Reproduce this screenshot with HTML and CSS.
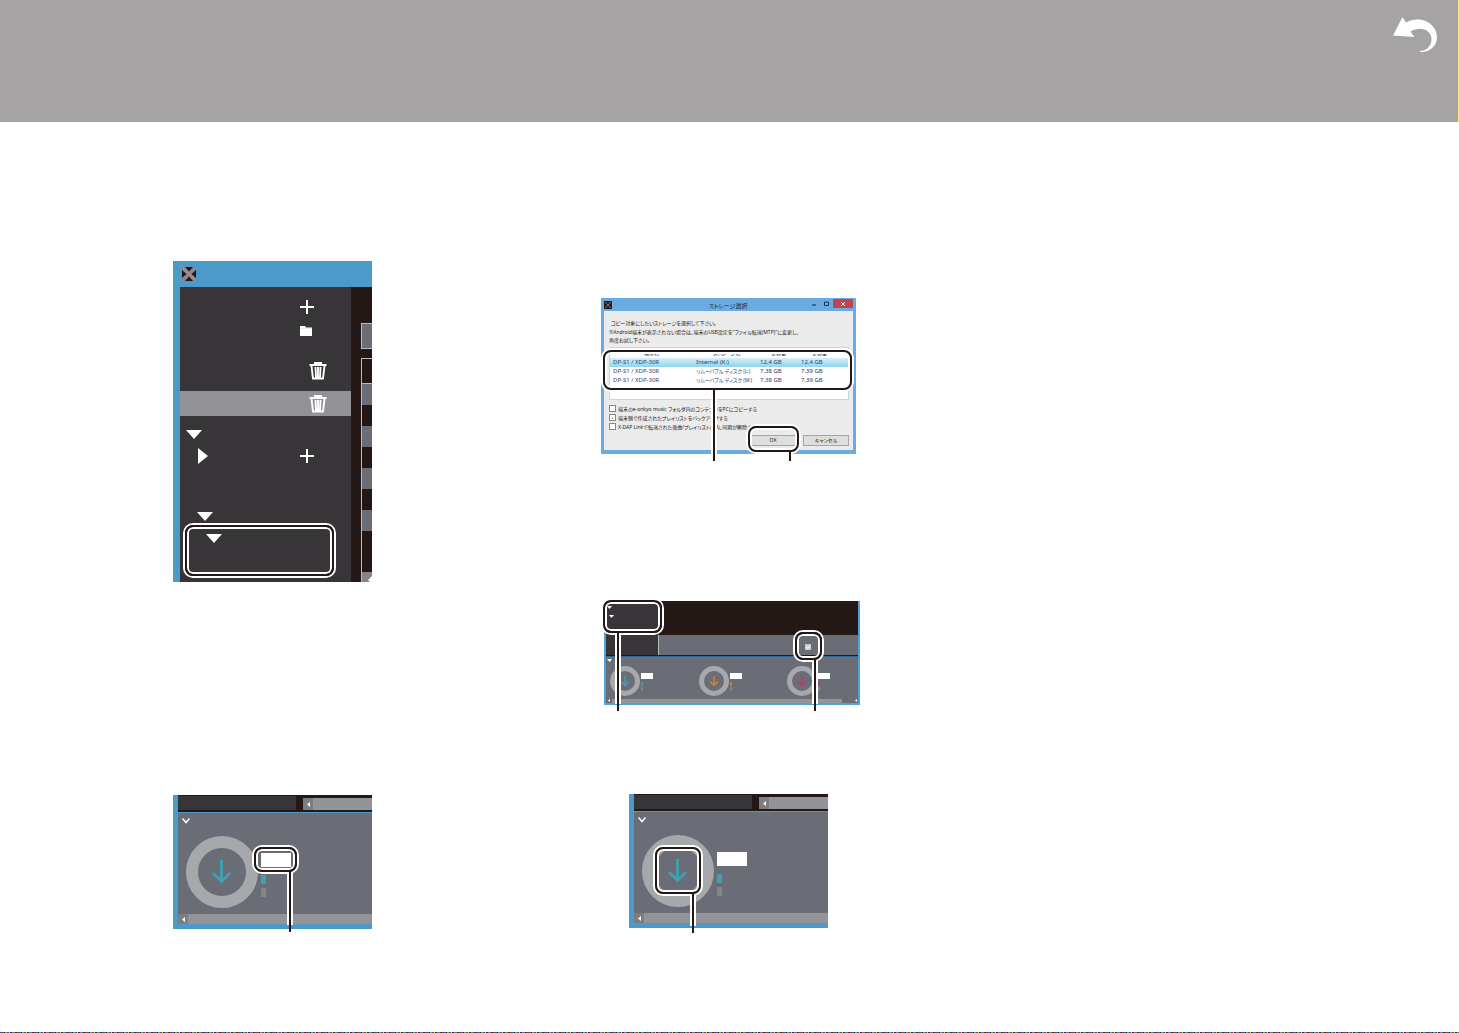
FILE: index.html
```html
<!DOCTYPE html>
<html lang="ja">
<head>
<meta charset="utf-8">
<title>X-DAP Link</title>
<link rel="stylesheet" href="styles.css">
</head>
<body>
<header class="page-header">
  <a class="back" href="#" aria-label="戻る">
    <svg width="44" height="36" viewBox="0 0 44 36"><path d="M0 18.500L9.500 0L13 5.500C17 3 22 2 27 2.500C36 3.500 44 11 44 20C44 29 37 35.500 27 35V34C33 34 38.500 29.500 38.500 22C38.500 13 27 8.500 17.500 14.500L21.500 20Z" fill="#fff"/></svg>
  </a>
</header>

<main class="columns">
  <section class="column column-first">
    <figure class="app">
      <div class="app-title">
        <svg width="14" height="14" viewBox="0 0 14 14"><path d="M0 0H14V14H0Z" fill="#8b8990"/><path d="M3 0H11L7 4.500ZM0 3L4.500 7L0 11ZM14 3L9.500 7L14 11ZM3 14H11L7 9.500Z" fill="#231815"/><path d="M1 1L13 13" stroke="#c08b8d" stroke-width="1.500" stroke-dasharray="1.500 1"/></svg>
      </div>
      <div class="app-body">
        <ul class="tree">
          <li class="tree-row tall"><button class="icon-btn add" aria-label="追加"><svg width="14" height="14"><path d="M7 0V14M0 7H14" stroke="#fff" stroke-width="2"/></svg></button></li>
          <li class="tree-row tall"><button class="icon-btn add" aria-label="フォルダ"><svg width="14" height="10"><path d="M0 0H5L6 1.500H12V10H0Z" fill="#fff"/><path d="M0 2.500H12" stroke="#ddd" stroke-width=".5"/></svg></button></li>
          <li class="tree-row list-item"><button class="icon-btn trash" aria-label="削除"><svg width="18" height="18" viewBox="0 0 18 18"><path d="M.5 3H17.500M6 3V1H12V3" fill="none" stroke="#fff" stroke-width="2"/><path d="M2.500 4L4 16.500H14L15.500 4M6.500 5L7 15.500M9 5V15.500M11.500 5L11 15.500" fill="none" stroke="#fff" stroke-width="1.900"/></svg></button></li>
          <li class="tree-row list-item selected"><button class="icon-btn trash" aria-label="削除"><svg width="18" height="18" viewBox="0 0 18 18"><path d="M.5 3H17.500M6 3V1H12V3" fill="none" stroke="#fff" stroke-width="2"/><path d="M2.500 4L4 16.500H14L15.500 4M6.500 5L7 15.500M9 5V15.500M11.500 5L11 15.500" fill="none" stroke="#fff" stroke-width="1.900"/></svg></button></li>
          <li class="tree-row level-1"><svg width="16" height="9"><path d="M0 0H16L8 9Z" fill="#fff"/></svg></li>
          <li class="tree-row level-2"><svg width="10" height="16"><path d="M0 0L10 8L0 16Z" fill="#fff"/></svg><button class="icon-btn add" aria-label="追加"><svg width="14" height="14"><path d="M7 0V14M0 7H14" stroke="#fff" stroke-width="2"/></svg></button></li>
          <li class="tree-row level-2 device"><svg width="16" height="9"><path d="M0 0H16L8 9Z" fill="#fff"/></svg></li>
          <li class="tree-row level-3"><svg width="16" height="9"><path d="M0 0H16L8 9Z" fill="#fff"/></svg></li>
        </ul>
        <div class="tracks">
          <div class="tracks-head"></div>
          <div class="tracks-list">
            <div class="track first"></div><div class="track odd"></div><div class="track"></div><div class="track odd"></div><div class="track"></div><div class="track odd"></div><div class="track"></div><div class="track odd"></div><div class="track last"></div>
            <div class="tracks-scroll"><svg width="4" height="8"><path d="M4 0V8L0 4Z" fill="#fff"/></svg></div>
          </div>
        </div>
      </div>
      <span class="callout callout-tree"></span>
    </figure>

    <figure class="panel">
      <div class="panel-top">
        <div class="panel-side"></div>
        <div class="scroll"><span class="scroll-btn"><svg width="3" height="5"><path d="M3 0V5L0 2.500Z" fill="#fff"/></svg></span></div>
      </div>
      <div class="panel-main">
        <svg class="chevron" width="8" height="6"><path d="M.5 .5L4 4.500L7.500 .5" fill="none" stroke="#fff" stroke-width="1.500"/></svg>
        <div class="meter teal">
          <svg class="dial" width="72" height="72" viewBox="0 0 72 72"><circle cx="36" cy="36" r="30" fill="none" stroke="#a6a8ab" stroke-width="12"/><path d="M35.500 24V45M27 37L35.500 45.500L44 37" fill="none" stroke="currentColor" stroke-width="3"/></svg>
          <div class="legend"><span class="value"></span><span class="bar"></span><span class="bar rest"></span></div>
        </div>
      </div>
      <div class="scroll"><span class="scroll-btn"><svg width="3" height="5"><path d="M3 0V5L0 2.500Z" fill="#fff"/></svg></span></div>
      <span class="callout callout-value"></span>
      <span class="leader leader-value"></span>
    </figure>
  </section>

  <section class="column column-second">
    <figure class="dialog">
      <div class="dialog-title">
        <svg class="dialog-icon" width="8" height="8"><path d="M0 0H8V8H0Z" fill="#251d20"/><path d="M1 1L7 7M7 1L1 7" stroke="#8d6a68"/></svg>
        <span class="dialog-name">ストレージ選択</span>
        <button class="win-btn" aria-label="最小化"><svg width="5" height="5"><path d="M0 4H4" stroke="#222"/></svg></button>
        <button class="win-btn" aria-label="最大化"><svg width="5" height="5"><path d="M.5 1H4.500V4.500H.5Z" fill="none" stroke="#234"/></svg></button>
        <button class="win-btn close" aria-label="閉じる"><svg width="4" height="4"><path d="M0 0L4 4M4 0L0 4" stroke="#fff"/></svg></button>
      </div>
      <div class="dialog-body">
        <p class="lead">コピー対象にしたいストレージを選択して下さい。</p>
        <p class="note">※Android端末が表示されない場合は、端末のUSB設定を"ファイル転送(MTP)"に変更し、<br>再度お試し下さい。</p>
        <div class="storage">
          <table>
            <thead><tr><th class="c-device">端末名</th><th class="c-storage">ストレージ名</th><th class="c-free">空容量</th><th>全容量</th></tr></thead>
            <tbody>
              <tr class="chosen"><td>DP-S1 / XDP-30R</td><td>Internal (K:)</td><td>12.4 GB</td><td>12.4 GB</td></tr>
              <tr><td>DP-S1 / XDP-30R</td><td>リムーバブル ディスク (L:)</td><td>7.38 GB</td><td>7.39 GB</td></tr>
              <tr><td>DP-S1 / XDP-30R</td><td>リムーバブル ディスク (M:)</td><td>7.38 GB</td><td>7.39 GB</td></tr>
            </tbody>
          </table>
        </div>
        <label class="option"><input type="checkbox">端末のe-onkyo music フォルダ内のコンテンツをPCにコピーする</label>
        <label class="option"><input type="checkbox" class="dotted">端末側で作成されたプレイリストをバックアップする</label>
        <label class="option"><input type="checkbox">X-DAP Linkで転送された楽曲/プレイリストの内、同期が解除されたものを削除する</label>
        <div class="actions"><button>OK</button><button>キャンセル</button></div>
      </div>
      <span class="callout callout-list"></span>
      <span class="leader leader-list"></span>
      <span class="callout callout-ok"></span>
      <span class="leader leader-ok"></span>
    </figure>

    <figure class="overview">
      <div class="overview-top">
        <div class="overview-side">
          <svg width="5" height="3"><path d="M0 0H5L2.500 3Z" fill="#fff"/></svg>
          <svg class="child" width="5" height="3"><path d="M0 0H5L2.500 3Z" fill="#fff"/></svg>
        </div>
        <div class="overview-content">
          <div class="toolbar"><input type="checkbox" class="sync" aria-label="同期" checked></div>
        </div>
      </div>
      <div class="overview-main">
        <svg class="mini-chevron" width="5" height="3"><path d="M0 0H5L2.500 3Z" fill="#fff"/></svg>
        <div class="meters">
          <div class="meter small teal"><svg class="dial" width="30" height="30" viewBox="0 0 30 30"><circle cx="15" cy="15" r="12.500" fill="none" stroke="#a6a8ab" stroke-width="5"/><path d="M15 10V19M11 15.500L15 19.500L19 15.500" fill="none" stroke="currentColor" stroke-width="1.500"/></svg><div class="legend"><span class="value"></span><span class="bar"></span><span class="bar rest"></span></div></div>
          <div class="meter small orange"><svg class="dial" width="30" height="30" viewBox="0 0 30 30"><circle cx="15" cy="15" r="12.500" fill="none" stroke="#a6a8ab" stroke-width="5"/><path d="M15 10V19M11 15.500L15 19.500L19 15.500" fill="none" stroke="currentColor" stroke-width="1.500"/></svg><div class="legend"><span class="value"></span><span class="bar"></span><span class="bar rest"></span></div></div>
          <div class="meter small pink"><svg class="dial" width="30" height="30" viewBox="0 0 30 30"><circle cx="15" cy="15" r="12.500" fill="none" stroke="#a6a8ab" stroke-width="5"/><path d="M15 10V19M11 15.500L15 19.500L19 15.500" fill="none" stroke="currentColor" stroke-width="1.500"/></svg><div class="legend"><span class="value"></span><span class="bar"></span><span class="bar rest"></span></div></div>
        </div>
      </div>
      <div class="mini-scroll"><svg width="2" height="3"><path d="M2 0V3L0 1.500Z" fill="#fff"/></svg><span class="mini-thumb"></span><svg width="2" height="3"><path d="M2 0V3L0 1.500Z" fill="#fff"/></svg></div>
      <span class="callout callout-side"></span>
      <span class="leader leader-side"></span>
      <span class="callout callout-sync"></span>
      <span class="leader leader-sync"></span>
    </figure>

    <figure class="panel panel-transfer">
      <div class="panel-top">
        <div class="panel-side"></div>
        <div class="scroll"><span class="scroll-btn"><svg width="3" height="5"><path d="M3 0V5L0 2.500Z" fill="#fff"/></svg></span></div>
      </div>
      <div class="panel-main">
        <svg class="chevron" width="8" height="6"><path d="M.5 .5L4 4.500L7.500 .5" fill="none" stroke="#fff" stroke-width="1.500"/></svg>
        <div class="meter teal">
          <svg class="dial" width="72" height="72" viewBox="0 0 72 72"><circle cx="36" cy="36" r="30" fill="none" stroke="#a6a8ab" stroke-width="12"/><path d="M35.500 24V45M27 37L35.500 45.500L44 37" fill="none" stroke="currentColor" stroke-width="3"/></svg>
          <div class="legend"><span class="value"></span><span class="bar"></span><span class="bar rest"></span></div>
        </div>
      </div>
      <div class="scroll"><span class="scroll-btn"><svg width="3" height="5"><path d="M3 0V5L0 2.500Z" fill="#fff"/></svg></span></div>
      <span class="callout callout-dial"></span>
      <span class="leader leader-dial"></span>
    </figure>
  </section>
</main>
<div class="page-rule"></div>
</body>
</html>
```
FILE: styles.css
```css
:root {
  --ink: #231815;
  --panel: #373538;
  --grey: #6a6d75;
  --blue: #4b9ac9;
}

* { box-sizing: border-box; }

body {
  margin: 0;
  min-height: 100vh;
  display: flex;
  flex-direction: column;
  background: #fff;
  font-family: "Noto Sans", "Noto Sans CJK JP", sans-serif;
}

svg { display: block; flex: none; }
figure, p, ul { margin: 0; padding: 0; }
button { margin: 0; padding: 0; border: 0; background: none; font: inherit; color: inherit; }
figure { position: relative; }

.page-header {
  display: flex;
  justify-content: flex-end;
  height: 122px;
  padding: 17px 21px 0 0;
  background: #a5a3a4;
  border-right: 1px solid #f3ee7c;
}

.columns {
  flex: 1;
  display: grid;
  grid-template-columns: repeat(3, 1fr);
  padding: 0 2px 0 173px;
}
.column { display: flex; flex-direction: column; align-items: flex-start; }
.column-first { padding-top: 139px; gap: 213px; }
.column-second { padding-top: 176px; }

/* Highlight frames and their leader lines */
.callout {
  position: absolute;
  border: 2px solid var(--ink);
  border-radius: 8px;
  box-shadow: 0 0 0 2px #fff, inset 0 0 0 2px #fff;
}
.leader {
  position: absolute;
  width: 2px;
  background: var(--ink);
}
.leader::before {
  content: "";
  position: absolute;
  inset: 0 -2px 7px;
  border: solid #fff;
  border-width: 0 2px;
}

/* Application window with playlist tree */
.app { width: 199px; background: var(--blue); }
.app-title { height: 26px; padding: 6px 0 0 9px; }
.app-body { display: flex; padding-left: 7px; background: var(--blue); }
.tree {
  width: 171px;
  padding: 8px 0 33px;
  background: var(--panel);
  list-style: none;
}
.tree-row { display: flex; align-items: center; height: 22px; }
.tree-row.tall { height: 24px; }
.tree-row.list-item { height: 26px; margin: 15px 0 7px; }
.tree-row.selected { height: 25px; margin-top: 0; background: #929297; }
.level-1 { padding-left: 6px; }
.level-2 { padding-left: 18px; }
.level-2.device { margin-top: 38px; padding-left: 17px; }
.level-3 { padding-left: 26px; }
.icon-btn { margin-left: auto; }
.icon-btn.add { margin-right: 37px; }
.icon-btn.trash { margin-right: 24px; }
.tracks {
  flex: 1;
  display: flex;
  flex-direction: column;
  gap: 9px;
  padding: 36px 0 0 10px;
  background: var(--ink);
}
.tracks-head { height: 26px; background: var(--grey); border: 1px solid #b9bbbd; border-right: 0; }
.tracks-list { flex: 1; display: flex; flex-direction: column; border: 1px solid #b9bbbd; border-width: 1px 0 0 1px; }
.track { height: 21px; }
.track.odd { background: var(--grey); }
.track.first { height: 25px; border-bottom: 1px solid #b9bbbd; }
.track.last { flex: 1; }
.tracks-scroll { display: flex; justify-content: flex-end; height: 10px; padding-top: 4px; background: #848489; overflow: hidden; }
.callout-tree { left: 12px; top: 264px; width: 149px; height: 51px; }

/* Transfer panel */
.panel {
  width: 199px;
  padding: 0 0 5px 5px;
  background: var(--blue);
}
.panel-top {
  display: flex;
  height: 18px;
  padding: 1px 0 2px;
  background: var(--ink);
  border-bottom: 1px solid var(--blue);
}
.panel-side { width: 118px; margin-right: 7px; background: var(--panel); }
.panel-top .scroll { flex: 1; margin-top: 2px; height: 12px; }
.scroll { display: flex; height: 10px; background: #939398; }
.scroll-btn { display: flex; align-items: center; justify-content: center; width: 10px; background: #7d7d82; }
.panel-main { height: 101px; padding: 5px 0 0 4px; background: var(--grey); }
.meter { display: flex; }
.panel .meter { padding: 12px 0 0 4px; }
.legend { display: flex; flex-direction: column; align-items: flex-start; }
.panel .legend { padding: 17px 0 0 3px; }
.value { width: 30px; height: 14px; margin-bottom: 8px; background: #fff; }
.bar { width: 5px; height: 9px; margin-bottom: 4px; background: currentColor; }
.bar.rest { background: #85868a; }
.teal { color: #429fae; }
.orange { color: #c9803f; }
.pink { color: #c2376f; }
.callout-value { left: 81px; top: 52px; width: 43px; height: 25px; }
.leader-value { left: 116px; top: 76px; height: 61px; }

/* Storage dialog */
.dialog {
  width: 255px;
  padding: 0 3px 4px;
  background: #6aabe2;
  font-size: 5px;
  line-height: 8px;
  font-feature-settings: "palt";
  color: #222;
  white-space: nowrap;
}
.dialog-title { display: flex; height: 13px; }
.dialog-icon { margin-top: 3px; }
.dialog-name { flex: 1; padding: 4px 0 0 36px; font-size: 6px; text-align: center; }
.win-btn { display: flex; align-items: center; justify-content: center; width: 12px; height: 9px; margin-top: 1px; }
.win-btn.close { width: 20px; margin-left: 1px; background: #c5434f; }
.dialog-body { padding: 8px 4px 4px 5px; background: #ebebeb; }
.lead { padding-left: 2px; }
.note { margin-top: 1px; }
.storage {
  height: 53px;
  margin: 3px 0 4px;
  border: 1px solid #b9dbe8;
  background: #fff;
}
table { width: 100%; table-layout: fixed; border-collapse: collapse; }
th, td { height: 9px; padding: 0 0 0 3px; line-height: 9px; text-align: left; font-weight: 400; }
th { height: 10px; line-height: 10px; }
td { font-size: 6px; color: #34386c; }
td:nth-child(2) { font-size: 5px; }
.chosen td:nth-child(2) { font-size: 6px; }
th { padding-left: 34px; }
th.c-storage { padding-left: 20px; }
th.c-free { padding-left: 14px; }
th:last-child { padding-left: 14px; }
.c-device { width: 83px; }
.c-storage { width: 64px; }
.c-free { width: 41px; }
.chosen { background: linear-gradient(#d6f0f8, #8fd3ea); }
.option { display: flex; align-items: center; gap: 2px; height: 9px; }
.option input {
  appearance: none;
  flex: none;
  width: 7px;
  height: 7px;
  margin: 0;
  border: 1px solid #888;
  background: #fff;
}
.option .dotted { background: linear-gradient(#666, #666) 2px 3px / 1px 1px no-repeat #fff; }
.actions { display: flex; justify-content: flex-end; gap: 7px; padding-top: 4px; }
.actions button { width: 46px; height: 11px; border: 1px solid #a5a5a5; background: #dedede; line-height: 9px; }
.callout-list { left: 2px; top: 52px; width: 249px; height: 40px; }
.leader-list { left: 112px; top: 91px; height: 72px; }
.callout-ok { left: 147px; top: 128px; width: 51px; height: 26px; }
.leader-ok { left: 188px; top: 153px; height: 10px; }

/* Device overview strip */
.overview {
  width: 256px;
  margin: 147px 0 89px 3px;
  padding: 0 2px 2px;
  background: #4fa3d3;
}
.overview-top { display: flex; height: 56px; padding-bottom: 1px; background: var(--ink); border-bottom: 1px solid #2a6b98; }
.overview-side { width: 52px; padding: 5px 0 0 1px; background: var(--panel); }
.overview-side .child { margin: 6px 0 0 2px; }
.overview-content { flex: 1; display: flex; align-items: flex-end; }
.toolbar { flex: 1; display: flex; align-items: center; justify-content: flex-end; height: 20px; padding: 3px 47px 0 0; background: var(--grey); border-left: 1px solid #b9bbbd; }
.sync {
  appearance: none;
  display: flex;
  width: 6px;
  height: 6px;
  margin: 0;
  background: #c9cacc;
}
.sync::after { content: ""; width: 4px; height: 2px; margin: 1px; border: solid #fff; border-width: 0 0 1px 1px; transform: rotate(-45deg); }
.overview-main { height: 41px; padding: 2px 0 0 1px; background: var(--grey); }
.meters { display: grid; grid-template-columns: 89px 88px 1fr; padding: 4px 0 0 3px; }
.small .legend { padding: 7px 0 0 1px; }
.small .value { width: 12px; height: 6px; margin-bottom: 3px; }
.small .bar { width: 2px; height: 4px; margin-bottom: 1px; }
.mini-scroll { display: flex; align-items: center; gap: 2px; height: 5px; padding: 0 1px 0 2px; background: var(--grey); }
.mini-thumb { flex: 1; height: 4px; margin-right: 11px; background: #939398; }
.callout-side { left: -1px; top: -1px; width: 59px; height: 33px; }
.leader-side { left: 13px; top: 31px; height: 79px; }
.callout-sync { left: 191px; top: 31px; width: 27px; height: 28px; }
.leader-sync { left: 210px; top: 58px; height: 52px; }

.panel-transfer { margin-left: 28px; }
.callout-dial { left: 26px; top: 53px; width: 46px; height: 47px; }
.leader-dial { left: 63px; top: 99px; height: 40px; }

/* The leader's white edge starts below the frame's own border */
.leader::before { top: 1px; }

.page-rule {
  height: 1px;
  background: repeating-linear-gradient(90deg, #a3264f 0 2px, #2c5ad0 2px 4px, #222 4px 5px, #58b357 5px 7px, #7f2fa8 7px 9px, #d8c34a 9px 10px, #2b2b55 10px 12px, #c95a8e 12px 13px, #2f8f8f 13px 15px, #51301f 15px 17px);
}
```
